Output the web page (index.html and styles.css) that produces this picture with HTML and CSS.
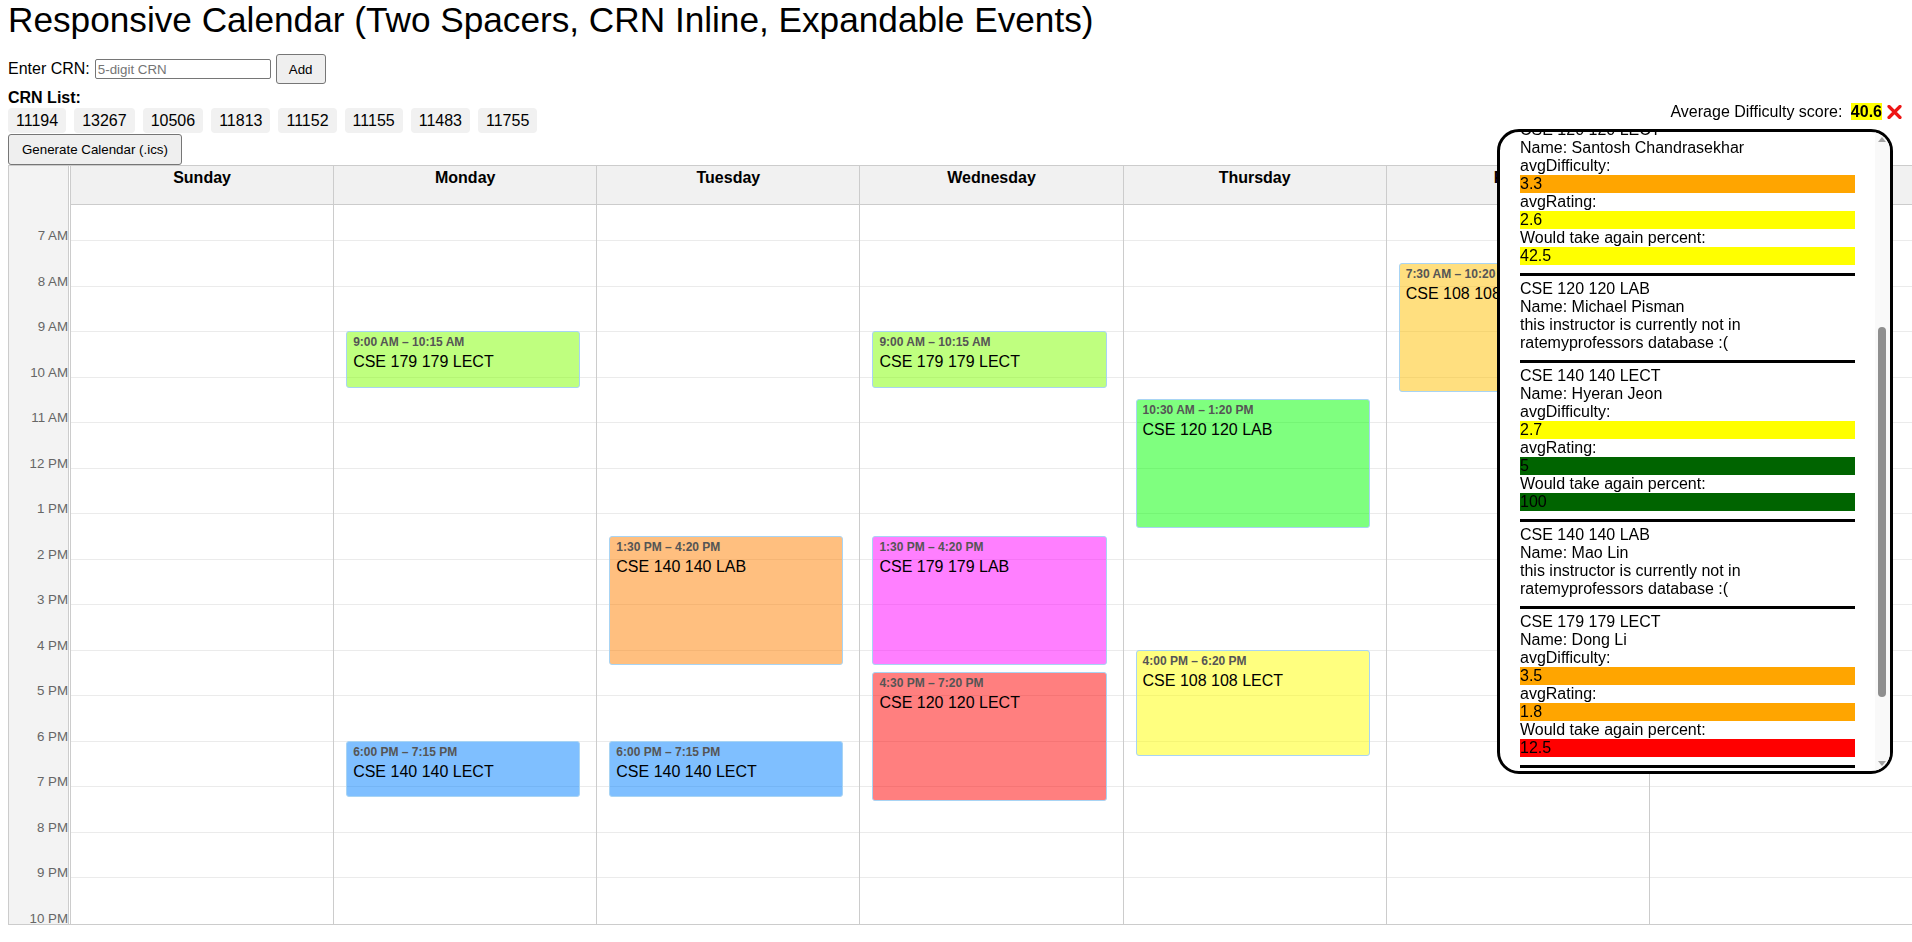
FILE: index.html
```html
<!DOCTYPE html>
<html lang="en">
<head>
<meta charset="utf-8">
<title>Responsive Calendar</title>
<link rel="stylesheet" href="styles.css">
</head>
<body>
<h1 class="title">Responsive Calendar (Two Spacers, CRN Inline, Expandable Events)</h1>

<div class="crn-form">
  <label for="crn">Enter CRN:</label>
  <input id="crn" class="crn-input" type="text" placeholder="5-digit CRN">
  <button class="btn btn-add" type="button">Add</button>
</div>
<div class="crn-label">CRN List:</div>
<div class="crn-list">
  <span class="chip">11194</span>
  <span class="chip">13267</span>
  <span class="chip">10506</span>
  <span class="chip">11813</span>
  <span class="chip">11152</span>
  <span class="chip">11155</span>
  <span class="chip">11483</span>
  <span class="chip">11755</span>
</div>
<button class="btn btn-generate" type="button">Generate Calendar (.ics)</button>

<div class="calendar">
  <div class="time-col">
    <div class="time-head"></div>
    <div class="time-slot first"><span>7 AM</span></div>
    <div class="time-slot"><span>8 AM</span></div>
    <div class="time-slot"><span>9 AM</span></div>
    <div class="time-slot"><span>10 AM</span></div>
    <div class="time-slot"><span>11 AM</span></div>
    <div class="time-slot"><span>12 PM</span></div>
    <div class="time-slot"><span>1 PM</span></div>
    <div class="time-slot"><span>2 PM</span></div>
    <div class="time-slot"><span>3 PM</span></div>
    <div class="time-slot"><span>4 PM</span></div>
    <div class="time-slot"><span>5 PM</span></div>
    <div class="time-slot"><span>6 PM</span></div>
    <div class="time-slot"><span>7 PM</span></div>
    <div class="time-slot"><span>8 PM</span></div>
    <div class="time-slot"><span>9 PM</span></div>
    <div class="time-slot"><span>10 PM</span></div>
  </div>
  <div class="col-spacer"></div>

  <div class="day">
    <div class="day-head">Sunday</div>
    <div class="day-body">
      <div class="slot first"></div><div class="slot"></div><div class="slot"></div><div class="slot"></div><div class="slot"></div><div class="slot"></div><div class="slot"></div><div class="slot"></div><div class="slot"></div><div class="slot"></div><div class="slot"></div><div class="slot"></div><div class="slot"></div><div class="slot"></div><div class="slot"></div><div class="slot last"></div>
    </div>
  </div>

  <div class="day">
    <div class="day-head">Monday</div>
    <div class="day-body">
      <div class="slot first"></div><div class="slot"></div><div class="slot"></div><div class="slot"></div><div class="slot"></div><div class="slot"></div><div class="slot"></div><div class="slot"></div><div class="slot"></div><div class="slot"></div><div class="slot"></div><div class="slot"></div><div class="slot"></div><div class="slot"></div><div class="slot"></div><div class="slot last"></div>
      <div class="event ev-lime" style="top:126px;height:56.875px"><div class="event-time">9:00 AM – 10:15 AM</div><div class="event-title">CSE 179 179 LECT</div></div>
      <div class="event ev-blue" style="top:535.5px;height:56.875px"><div class="event-time">6:00 PM – 7:15 PM</div><div class="event-title">CSE 140 140 LECT</div></div>
    </div>
  </div>

  <div class="day">
    <div class="day-head">Tuesday</div>
    <div class="day-body">
      <div class="slot first"></div><div class="slot"></div><div class="slot"></div><div class="slot"></div><div class="slot"></div><div class="slot"></div><div class="slot"></div><div class="slot"></div><div class="slot"></div><div class="slot"></div><div class="slot"></div><div class="slot"></div><div class="slot"></div><div class="slot"></div><div class="slot"></div><div class="slot last"></div>
      <div class="event ev-orange" style="top:330.75px;height:128.92px"><div class="event-time">1:30 PM – 4:20 PM</div><div class="event-title">CSE 140 140 LAB</div></div>
      <div class="event ev-blue" style="top:535.5px;height:56.875px"><div class="event-time">6:00 PM – 7:15 PM</div><div class="event-title">CSE 140 140 LECT</div></div>
    </div>
  </div>

  <div class="day">
    <div class="day-head">Wednesday</div>
    <div class="day-body">
      <div class="slot first"></div><div class="slot"></div><div class="slot"></div><div class="slot"></div><div class="slot"></div><div class="slot"></div><div class="slot"></div><div class="slot"></div><div class="slot"></div><div class="slot"></div><div class="slot"></div><div class="slot"></div><div class="slot"></div><div class="slot"></div><div class="slot"></div><div class="slot last"></div>
      <div class="event ev-lime" style="top:126px;height:56.875px"><div class="event-time">9:00 AM – 10:15 AM</div><div class="event-title">CSE 179 179 LECT</div></div>
      <div class="event ev-magenta" style="top:330.75px;height:128.92px"><div class="event-time">1:30 PM – 4:20 PM</div><div class="event-title">CSE 179 179 LAB</div></div>
      <div class="event ev-red" style="top:467.25px;height:128.92px"><div class="event-time">4:30 PM – 7:20 PM</div><div class="event-title">CSE 120 120 LECT</div></div>
    </div>
  </div>

  <div class="day">
    <div class="day-head">Thursday</div>
    <div class="day-body">
      <div class="slot first"></div><div class="slot"></div><div class="slot"></div><div class="slot"></div><div class="slot"></div><div class="slot"></div><div class="slot"></div><div class="slot"></div><div class="slot"></div><div class="slot"></div><div class="slot"></div><div class="slot"></div><div class="slot"></div><div class="slot"></div><div class="slot"></div><div class="slot last"></div>
      <div class="event ev-green" style="top:194.25px;height:128.92px"><div class="event-time">10:30 AM – 1:20 PM</div><div class="event-title">CSE 120 120 LAB</div></div>
      <div class="event ev-yellow" style="top:444.5px;height:106.17px"><div class="event-time">4:00 PM – 6:20 PM</div><div class="event-title">CSE 108 108 LECT</div></div>
    </div>
  </div>

  <div class="day">
    <div class="day-head">Friday</div>
    <div class="day-body">
      <div class="slot first"></div><div class="slot"></div><div class="slot"></div><div class="slot"></div><div class="slot"></div><div class="slot"></div><div class="slot"></div><div class="slot"></div><div class="slot"></div><div class="slot"></div><div class="slot"></div><div class="slot"></div><div class="slot"></div><div class="slot"></div><div class="slot"></div><div class="slot last"></div>
      <div class="event ev-gold" style="top:57.75px;height:128.92px"><div class="event-time">7:30 AM – 10:20 AM</div><div class="event-title">CSE 108 108 LAB</div></div>
    </div>
  </div>

  <div class="day">
    <div class="day-head">Saturday</div>
    <div class="day-body">
      <div class="slot first"></div><div class="slot"></div><div class="slot"></div><div class="slot"></div><div class="slot"></div><div class="slot"></div><div class="slot"></div><div class="slot"></div><div class="slot"></div><div class="slot"></div><div class="slot"></div><div class="slot"></div><div class="slot"></div><div class="slot"></div><div class="slot"></div><div class="slot last"></div>
    </div>
  </div>
</div>

<div class="summary">Average Difficulty score: <span class="score">40.6</span><svg class="close-icon" width="15" height="14" viewBox="0 0 15 14" aria-label="close"><path d="M2 1.5 L13 12.5 M13 1.5 L2 12.5" stroke="#ee1515" stroke-width="3.2" stroke-linecap="round" fill="none"/></svg></div>

<div class="popup">
  <div class="popup-scroll">
    <div class="entry">
      <div>CSE 108 108 LECT</div>
      <div>Name: Angelo Kyrilov</div>
      <div>avgDifficulty:</div>
      <div class="bar bar-yellow">2.9</div>
      <div>avgRating:</div>
      <div class="bar bar-yellow">3.4</div>
      <div>Would take again percent:</div>
      <div class="bar bar-yellow">61</div>
    </div>
    <div class="entry">
      <div>CSE 108 108 LAB</div>
      <div>Name: Staff</div>
      <div>this instructor is currently not in ratemyprofessors database :(</div>
    </div>
    <div class="entry">
      <div>CSE 120 120 LECT</div>
      <div>Name: Santosh Chandrasekhar</div>
      <div>avgDifficulty:</div>
      <div class="bar bar-orange">3.3</div>
      <div>avgRating:</div>
      <div class="bar bar-yellow">2.6</div>
      <div>Would take again percent:</div>
      <div class="bar bar-yellow">42.5</div>
    </div>
    <div class="entry">
      <div>CSE 120 120 LAB</div>
      <div>Name: Michael Pisman</div>
      <div>this instructor is currently not in ratemyprofessors database :(</div>
    </div>
    <div class="entry">
      <div>CSE 140 140 LECT</div>
      <div>Name: Hyeran Jeon</div>
      <div>avgDifficulty:</div>
      <div class="bar bar-yellow">2.7</div>
      <div>avgRating:</div>
      <div class="bar bar-green">5</div>
      <div>Would take again percent:</div>
      <div class="bar bar-green">100</div>
    </div>
    <div class="entry">
      <div>CSE 140 140 LAB</div>
      <div>Name: Mao Lin</div>
      <div>this instructor is currently not in ratemyprofessors database :(</div>
    </div>
    <div class="entry">
      <div>CSE 179 179 LECT</div>
      <div>Name: Dong Li</div>
      <div>avgDifficulty:</div>
      <div class="bar bar-orange">3.5</div>
      <div>avgRating:</div>
      <div class="bar bar-orange">1.8</div>
      <div>Would take again percent:</div>
      <div class="bar bar-red">12.5</div>
    </div>
    <div class="entry">
      <div>CSE 179 179 LAB</div>
      <div>Name: Staff</div>
      <div>this instructor is currently not in ratemyprofessors database :(</div>
    </div>
  </div>
  <div class="scrollbar" aria-hidden="true">
    <span class="sb-arrow sb-up"></span>
    <span class="sb-thumb"></span>
    <span class="sb-arrow sb-down"></span>
  </div>
</div>

<script src="script.js"></script>
</body>
</html>
```
FILE: styles.css
```css
* {
  box-sizing: border-box;
}

body {
  margin: 0 0 0 8px;
  font-family: "Liberation Sans", Arial, sans-serif;
  color: #000;
  background: #fff;
}

.title {
  margin: 0 0 14px;
  font-size: 35.2px;
  font-weight: normal;
  line-height: 40px;
}

.crn-form {
  display: flex;
  align-items: center;
  gap: 5px;
  height: 30px;
  font-size: 16px;
}

.crn-input {
  width: 176px;
  height: 20px;
  margin: 0;
  border: 1px solid #767676;
  border-radius: 2px;
  padding: 1px 2px;
  font: 13.33px "Liberation Sans", Arial, sans-serif;
  color: #000;
}

.crn-input::placeholder {
  color: #757575;
}

.btn {
  margin: 0;
  font: 13.33px "Liberation Sans", Arial, sans-serif;
  color: #000;
  background: #efefef;
  border: 1px solid #767676;
  border-radius: 3px;
}

.btn-add {
  height: 30px;
  padding: 0 12px;
}

.crn-label {
  margin-top: 4px;
  font-size: 16px;
  font-weight: bold;
  line-height: 20px;
}

.crn-list {
  display: flex;
  gap: 8px;
}

.chip {
  padding: 3px 8px;
  font-size: 16px;
  line-height: 19px;
  background: #f1f1f1;
  border-radius: 4px;
}

.btn-generate {
  display: block;
  margin-top: 1px;
  height: 31px;
  padding: 0 13px;
}

/* calendar */
.calendar {
  display: flex;
  border: 1px solid #ccc;
  border-right: 0;
}

.time-col {
  flex: none;
  width: 60px;
  background: #f3f3f3;
  border-right: 1px solid #ccc;
}

.time-head {
  height: 39px;
}

.time-slot {
  display: flex;
  align-items: flex-end;
  justify-content: flex-end;
  height: 45.5px;
  font-size: 13.33px;
  color: #666;
}

.time-slot.first {
  height: 36px;
}

.time-slot span {
  line-height: 10px;
  white-space: nowrap;
}

.col-spacer {
  flex: none;
  width: 1px;
}

.day {
  flex: 1 1 0;
  min-width: 0;
  border-left: 1px solid #ccc;
}

.day-head {
  height: 39px;
  padding-top: 3px;
  background: #f1f1f1;
  border-bottom: 1px solid #ccc;
  text-align: center;
  font-size: 16px;
  font-weight: bold;
}

.day-body {
  position: relative;
}

.slot {
  height: 45.5px;
  border-bottom: 1px solid #ebebeb;
}

.slot.first {
  height: 36px;
}

.slot.last {
  border-bottom: 0;
}

.event {
  position: absolute;
  left: 12px;
  right: 16px;
  padding: 3px 6px;
  border: 1px solid #a8d4f4;
  border-radius: 3px;
  overflow: hidden;
}

.event-time {
  font-size: 12px;
  font-weight: bold;
  color: #555;
  white-space: nowrap;
}

.event-title {
  margin-top: 4px;
  font-size: 16px;
  white-space: nowrap;
}

.ev-lime { background: rgba(128, 255, 0, 0.5); }
.ev-blue { background: rgba(0, 128, 255, 0.5); }
.ev-orange { background: rgba(255, 128, 0, 0.5); }
.ev-magenta { background: rgba(255, 0, 255, 0.5); }
.ev-red { background: rgba(255, 0, 0, 0.5); }
.ev-green { background: rgba(0, 255, 0, 0.5); }
.ev-yellow { background: rgba(255, 255, 0, 0.5); }
.ev-gold { background: rgba(255, 191, 0, 0.5); }

/* overlay: summary + professor popup */
.summary {
  position: fixed;
  top: 103px;
  right: 10px;
  z-index: 10;
  font-size: 16px;
  line-height: 18px;
  white-space: nowrap;
}

.score {
  margin-left: 4px;
  font-weight: bold;
  background: #ffff00;
}

.close-icon {
  margin-left: 5px;
  vertical-align: -2px;
}

.popup {
  position: fixed;
  top: 129px;
  right: 19px;
  z-index: 10;
  width: 396px;
  height: 645px;
  overflow: hidden;
  background: #fff;
  border: 3px solid #000;
  border-radius: 22px;
}

.popup-scroll {
  height: 100%;
  padding: 50px 35px 18px 20px;
  overflow-y: scroll;
  scrollbar-width: none;
  font-size: 16px;
  line-height: 18px;
}

.popup-scroll::-webkit-scrollbar {
  display: none;
}

.entry {
  padding: 4px 0 8px;
  border-bottom: 3px solid #000;
}

.bar-orange { background: #ffa500; }
.bar-yellow { background: #ffff00; }
.bar-green { background: #006400; }
.bar-red { background: #ff0000; }

/* drawn scrollbar lying over the right edge of the popup */
.scrollbar {
  position: absolute;
  top: 0;
  right: 0;
  bottom: 0;
  width: 15px;
  background: #f9f9f9;
}

.sb-arrow {
  position: absolute;
  left: 3px;
  width: 9px;
  height: 15px;
}

.sb-up {
  top: 0;
}

.sb-down {
  bottom: 0;
}

.sb-up::before,
.sb-down::before {
  content: "";
  position: absolute;
  left: 0;
  border-left: 4.5px solid transparent;
  border-right: 4.5px solid transparent;
}

.sb-up::before {
  top: 5px;
  border-bottom: 5px solid #a3a3a3;
}

.sb-down::before {
  bottom: 5px;
  border-top: 5px solid #a3a3a3;
}

.sb-thumb {
  position: absolute;
  left: 3px;
  top: 195px;
  width: 8px;
  height: 370px;
  background: #8f8f8f;
  border-radius: 4px;
}
```
FILE: script.js
```js
(function () {
  var box = document.querySelector('.popup-scroll');
  var thumb = document.querySelector('.sb-thumb');
  box.scrollTop = 311;
  var arrow = 15;
  var track = box.clientHeight - arrow * 2;
  var total = box.scrollHeight;
  thumb.style.height = (track * box.clientHeight / total) + 'px';
  thumb.style.top = (arrow + track * box.scrollTop / total) + 'px';
})();
```
